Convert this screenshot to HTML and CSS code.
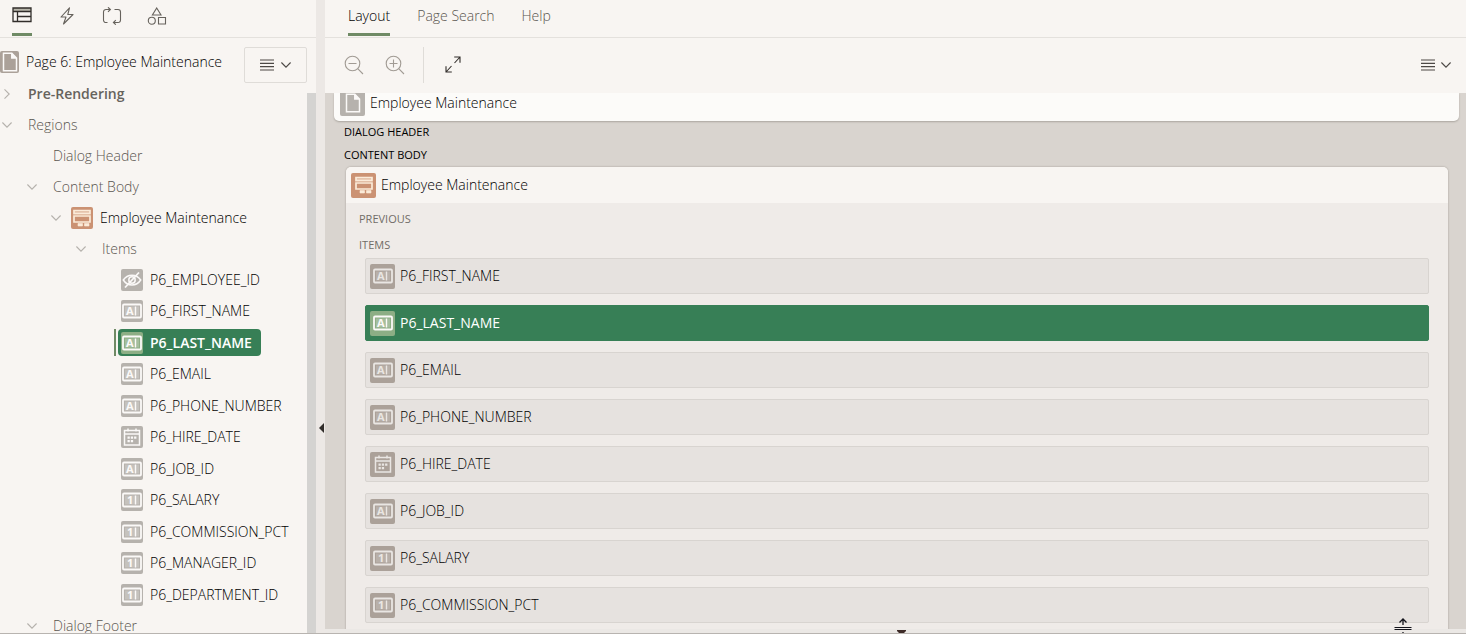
FILE: index.html
```html
<!DOCTYPE html>
<html lang="en">
<head>
<meta charset="utf-8">
<title>Page Designer</title>
<link rel="stylesheet" href="styles.css">
</head>
<body>
<svg class="defs" aria-hidden="true">
  <symbol id="text-field" viewBox="0 0 20 16">
    <rect x="1" y="1.5" width="18" height="13" rx="1" fill="none" stroke="currentColor" stroke-width="1.8"/>
    <rect x="3" y="3.5" width="14" height="9" fill="currentColor" opacity=".22"/>
    <text x="4" y="12" class="glyph">A</text>
    <path d="M13.5 3.5v9" stroke="currentColor" stroke-width="1.4"/>
  </symbol>
  <symbol id="number-field" viewBox="0 0 20 16">
    <rect x="1" y="1.5" width="18" height="13" rx="1" fill="none" stroke="currentColor" stroke-width="1.8"/>
    <rect x="3" y="3.5" width="14" height="9" fill="currentColor" opacity=".22"/>
    <text x="5" y="12" class="glyph">1</text>
    <path d="M13.5 3.5v9" stroke="currentColor" stroke-width="1.4"/>
  </symbol>
  <symbol id="date-field" viewBox="0 0 20 18">
    <path d="M2.5 2.500h15v14.500h-15zM2.5 6h15M6 .5v3M14 .5v3" fill="none" stroke="currentColor" stroke-width="1.500"/>
    <path d="M5.500 8.500h2.300v2.300H5.500zM8.800 8.500h2.300v2.300H8.800zM12.100 8.500h2.300v2.300h-2.300zM5.500 12h2.300v2.300H5.500zM8.800 12h2.300v2.300H8.800z" fill="currentColor"/>
  </symbol>
  <symbol id="hidden-field" viewBox="0 0 20 16">
    <path d="M1.300 8C5.500 1.500 14.500 1.500 18.700 8 14.500 14.500 5.500 14.500 1.300 8z" fill="none" stroke="currentColor" stroke-width="1.5"/>
    <circle cx="10" cy="8" r="3.200" fill="none" stroke="currentColor" stroke-width="1.5"/>
    <path d="M3 15.500L17 .500" stroke="currentColor" stroke-width="1.7"/>
  </symbol>
  <symbol id="form-region" viewBox="0 0 20 18">
    <path d="M2 1.500h16v3.200H2zM2 7h16v6H2z" fill="none" stroke="currentColor" stroke-width="1.700"/>
    <path d="M2 3.100h16" stroke="currentColor" stroke-width="1.400" opacity=".7"/>
    <path d="M6 14.500h4.500v2.500H6zM12.500 14.500H17V17h-4.500z" fill="currentColor" stroke="currentColor" stroke-width=".600"/>
  </symbol>
  <symbol id="page" viewBox="0 0 16 20">
    <path d="M1.500 1.200h8.300l4.700 4.800v12.800h-13zM9.800 1.200V6h4.700" fill="none" stroke="currentColor" stroke-width="1.500"/>
    <path d="M9.800 1.200V6h4.700z" fill="currentColor"/>
  </symbol>
  <symbol id="menu" viewBox="0 0 14 12">
    <path d="M0 1h14M0 4.300h14M0 7.600h14M0 11h14" stroke="currentColor" stroke-width="1.200"/>
  </symbol>
  <symbol id="chevron" viewBox="0 0 10 6">
    <path d="M.4.500L5 5.200 9.600.500" fill="none" stroke="currentColor" stroke-width="1.100"/>
  </symbol>
</svg>

<div class="designer">
  <section class="tree-pane" aria-label="Rendering">
    <nav class="icon-tabs">
      <button class="icon-tab active" aria-label="Rendering"><svg width="20" height="16" viewBox="0 0 20 16"><path d="M1 1h18v3H1z" fill="#b8b6ab"/><path d="M1 1h18v13.500H1zM1 4.500h18M5.500 4.500v10M5.500 9.500H19" fill="none" stroke="#312d2a" stroke-width="1.300"/></svg></button>
      <button class="icon-tab" aria-label="Dynamic Actions"><svg width="16" height="18" viewBox="0 0 16 18"><path d="M10.500.8L2 10h5l-2.500 7L14 7.500H8.800z" fill="none" stroke="currentColor" stroke-width="1.100" stroke-linejoin="round"/></svg></button>
      <button class="icon-tab" aria-label="Processing"><svg width="20" height="18" viewBox="0 0 20 18"><path d="M5.500 15.500H4a2.500 2.500 0 0 1-2.500-2.500V5A2.500 2.500 0 0 1 4 2.500h4M6 .300l2.400 2.200L6 4.800M12.500 2.500H16A2.500 2.500 0 0 1 18.500 5v8a2.500 2.500 0 0 1-2.500 2.500h-4.500M13.800 13.200l-2.400 2.300 2.400 2.200" fill="none" stroke="currentColor" stroke-width="1.100"/></svg></button>
      <button class="icon-tab" aria-label="Shared Components"><svg width="20" height="18" viewBox="0 0 20 18"><path d="M9.700 1L14 8H5.400zM11.500 10.500h7v6.500h-7z" fill="none" stroke="currentColor" stroke-width="1.100"/><circle cx="4.800" cy="13.700" r="3.500" fill="none" stroke="currentColor" stroke-width="1.100"/></svg></button>
    </nav>
    <div class="tree-body">
      <div class="tree-content">
        <div class="page-head">
          <span class="tile page-tile"><svg width="16" height="20"><use href="#page"/></svg></span>
          <span class="page-name">Page 6: Employee Maintenance</span>
          <button class="menu-button" aria-label="Tree menu"><svg width="14" height="12"><use href="#menu"/></svg><svg width="10" height="6"><use href="#chevron"/></svg></button>
        </div>
        <ul class="tree">
          <li class="node level-1 bold"><svg class="arrow closed" width="10" height="6"><use href="#chevron"/></svg><span>Pre-Rendering</span></li>
          <li class="node level-1"><svg class="arrow" width="10" height="6"><use href="#chevron"/></svg><span>Regions</span></li>
          <li class="node level-2"><span class="arrow"></span><span>Dialog Header</span></li>
          <li class="node level-2"><svg class="arrow" width="10" height="6"><use href="#chevron"/></svg><span>Content Body</span></li>
          <li class="node level-3 dark"><svg class="arrow" width="10" height="6"><use href="#chevron"/></svg><span class="tile region-tile"><svg width="20" height="18"><use href="#form-region"/></svg></span><span>Employee Maintenance</span></li>
          <li class="node level-4"><svg class="arrow" width="10" height="6"><use href="#chevron"/></svg><span>Items</span></li>
        </ul>
        <ul class="tree leaves">
          <li class="leaf"><span class="leaf-label"><span class="tile"><svg width="20" height="16"><use href="#hidden-field"/></svg></span>P6_EMPLOYEE_ID</span></li>
          <li class="leaf"><span class="leaf-label"><span class="tile"><svg width="20" height="16"><use href="#text-field"/></svg></span>P6_FIRST_NAME</span></li>
          <li class="leaf selected"><span class="leaf-label"><span class="tile"><svg width="20" height="16"><use href="#text-field"/></svg></span>P6_LAST_NAME</span></li>
          <li class="leaf"><span class="leaf-label"><span class="tile"><svg width="20" height="16"><use href="#text-field"/></svg></span>P6_EMAIL</span></li>
          <li class="leaf"><span class="leaf-label"><span class="tile"><svg width="20" height="16"><use href="#text-field"/></svg></span>P6_PHONE_NUMBER</span></li>
          <li class="leaf"><span class="leaf-label"><span class="tile"><svg width="20" height="18"><use href="#date-field"/></svg></span>P6_HIRE_DATE</span></li>
          <li class="leaf"><span class="leaf-label"><span class="tile"><svg width="20" height="16"><use href="#text-field"/></svg></span>P6_JOB_ID</span></li>
          <li class="leaf"><span class="leaf-label"><span class="tile"><svg width="20" height="16"><use href="#number-field"/></svg></span>P6_SALARY</span></li>
          <li class="leaf"><span class="leaf-label"><span class="tile"><svg width="20" height="16"><use href="#number-field"/></svg></span>P6_COMMISSION_PCT</span></li>
          <li class="leaf"><span class="leaf-label"><span class="tile"><svg width="20" height="16"><use href="#number-field"/></svg></span>P6_MANAGER_ID</span></li>
          <li class="leaf"><span class="leaf-label"><span class="tile"><svg width="20" height="16"><use href="#number-field"/></svg></span>P6_DEPARTMENT_ID</span></li>
        </ul>
        <ul class="tree">
          <li class="node level-2"><svg class="arrow" width="10" height="6"><use href="#chevron"/></svg><span>Dialog Footer</span></li>
        </ul>
      </div>
      <div class="scroll-track"></div>
    </div>
  </section>

  <div class="splitter"><svg class="collapse" width="5" height="10" viewBox="0 0 5 10"><path d="M5 0v10L0 5z" fill="#312d2a"/></svg></div>

  <main class="layout-pane">
    <nav class="text-tabs">
      <button class="text-tab active">Layout</button>
      <button class="text-tab">Page Search</button>
      <button class="text-tab">Help</button>
    </nav>
    <div class="toolbar">
      <button class="tool" aria-label="Zoom out"><svg width="20" height="20" viewBox="0 0 20 20" fill="none" stroke="#a19b94" stroke-width="1.100"><circle cx="8.500" cy="8.500" r="7.300"/><path d="M4.500 8.500h8M13.700 13.700l5.300 5.300"/></svg></button>
      <button class="tool" aria-label="Zoom in"><svg width="20" height="20" viewBox="0 0 20 20" fill="none" stroke="#a19b94" stroke-width="1.100"><circle cx="8.500" cy="8.500" r="7.300"/><path d="M4.500 8.500h8M8.500 4.500v8M13.700 13.700l5.300 5.300"/></svg></button>
      <span class="divider"></span>
      <button class="tool" aria-label="Expand"><svg width="16" height="17" viewBox="0 0 16 17" fill="none" stroke="#312d2a" stroke-width="1.100"><path d="M9.200 1H15v5.800M15 1L9.500 7M6.800 16H1v-5.800M1 16l5.500-6"/></svg></button>
      <button class="layout-menu" aria-label="Layout menu"><svg width="14" height="12"><use href="#menu"/></svg><svg width="10" height="6"><use href="#chevron"/></svg></button>
    </div>
    <div class="canvas">
      <div class="page-card"><span class="tile large"><svg width="16" height="20"><use href="#page"/></svg></span>Employee Maintenance</div>
      <h2 class="slot">Dialog Header</h2>
      <h2 class="slot">Content Body</h2>
      <section class="region">
        <header class="region-head"><span class="tile large region-tile"><svg width="20" height="18"><use href="#form-region"/></svg></span>Employee Maintenance</header>
        <div class="region-body">
          <h3 class="sub-slot">Previous</h3>
          <h3 class="sub-slot">Items</h3>
          <ul class="items">
            <li class="item"><span class="tile large"><svg width="20" height="16"><use href="#text-field"/></svg></span>P6_FIRST_NAME</li>
            <li class="item selected"><span class="tile large"><svg width="20" height="16"><use href="#text-field"/></svg></span>P6_LAST_NAME</li>
            <li class="item"><span class="tile large"><svg width="20" height="16"><use href="#text-field"/></svg></span>P6_EMAIL</li>
            <li class="item"><span class="tile large"><svg width="20" height="16"><use href="#text-field"/></svg></span>P6_PHONE_NUMBER</li>
            <li class="item"><span class="tile large"><svg width="20" height="18"><use href="#date-field"/></svg></span>P6_HIRE_DATE</li>
            <li class="item"><span class="tile large"><svg width="20" height="16"><use href="#text-field"/></svg></span>P6_JOB_ID</li>
            <li class="item"><span class="tile large"><svg width="20" height="16"><use href="#number-field"/></svg></span>P6_SALARY</li>
            <li class="item"><span class="tile large"><svg width="20" height="16"><use href="#number-field"/></svg></span>P6_COMMISSION_PCT</li>
          </ul>
        </div>
      </section>
    </div>
    <div class="bottom-splitter"><svg width="9" height="3" viewBox="0 0 9 3"><path d="M0 0h9v1L7 3H2L0 1z" fill="#3d2b28"/></svg></div>
    <svg class="cursor" width="18" height="16" viewBox="0 0 18 16"><path d="M9 1v6M5.500 4.500L9 1l3.500 3.500M9 14v2" fill="none" stroke="#14141c" stroke-width="1.300"/><path d="M.5 9.500h17M.5 11.500h17" stroke="#14141c"/></svg>
  </main>
</div>
</body>
</html>
```
FILE: styles.css
```css
* { box-sizing: border-box; }

body {
  margin: 0;
  background: #f8f5f2;
  color: #000;
  font: 300 14px/20px "Open Sans", sans-serif;
}

button {
  padding: 0;
  border: 0;
  background: none;
  color: inherit;
  font: inherit;
}

ul { margin: 0; padding: 0; list-style: none; }
svg { display: block; flex: none; }
.defs { display: none; }
.glyph { font: bold 11px "Open Sans", sans-serif; fill: currentColor; }

.designer {
  display: grid;
  grid-template-columns: 316px 9px minmax(0, 1fr);
  height: 100vh;
  overflow: hidden;
  border-bottom: 1px solid #b8b4b0;
}

/* Tree pane */
.tree-pane {
  display: flex;
  flex-direction: column;
  min-height: 0;
  overflow: hidden;
}

.icon-tabs, .text-tabs {
  display: flex;
  flex: none;
  height: 38px;
  border-bottom: 1px solid #e4e1dd;
}

.icon-tabs { gap: 25px; padding-left: 12px; color: #66625c; }

.icon-tab {
  display: flex;
  justify-content: center;
  width: 20px;
  height: 36px;
  padding-top: 7px;
}

.icon-tab.active, .text-tab.active { border-bottom: 3px solid #6f8a65; }

.tree-body {
  display: grid;
  grid-template-columns: minmax(0, 1fr) 9px;
  flex: 1;
  min-height: 0;
}

.scroll-track { margin-top: 55px; background: #d4d3d1; }
.tree-content { min-height: 0; overflow: hidden; }

.page-head {
  display: flex;
  align-items: flex-start;
  height: 40px;
  padding-top: 9px;
}

.page-name { margin: 5px auto 0 7px; white-space: nowrap; }

.menu-button {
  display: flex;
  align-items: center;
  justify-content: center;
  gap: 7px;
  flex: none;
  width: 63px;
  height: 36px;
  border: 1px solid #dfdcd8;
  border-radius: 2px;
  color: #4c4845;
}

.tile {
  display: flex;
  align-items: center;
  justify-content: center;
  flex: none;
  width: 22px;
  height: 22px;
  border-radius: 2px;
  background: #b6b2ad;
  color: #fbf9f8;
}

.tile.large { width: 25px; height: 25px; }
.tile.region-tile { background: #cb9273; color: #fbebd9; }
.page-tile { width: 19px; margin-top: 4px; background: #aba199; }

.node {
  display: flex;
  align-items: center;
  height: 31px;
  color: #5a5650;
}

.node.bold { font-weight: 600; color: #66635d; }
.node.dark { color: #000; }
.arrow { width: 10px; margin-right: 16px; flex: none; color: #b5b1ac; }
.arrow.closed { transform: rotate(-90deg); }
.level-1 { padding-left: 2px; }
.level-2 { padding-left: 27px; }
.level-3 { padding-left: 51px; gap: 7px; }
.level-3 .arrow { margin-right: 3px; }
.level-4 { padding-left: 76px; }

.leaf {
  display: flex;
  align-items: center;
  height: 31px;
  padding-left: 114px;
}

.leaf:nth-child(even) { height: 32px; }

.leaf-label {
  display: flex;
  align-items: center;
  gap: 7px;
  height: 27px;
  margin-left: 4px;
  padding: 0 9px 0 3px;
  border-radius: 4px;
}

.leaf.selected { font-weight: 600; }

.leaf.selected::before {
  content: "";
  width: 2px;
  height: 27px;
  margin-right: -2px;
  background: #6f8a65;
}

.selected .leaf-label { background: #377f56; color: #fff; }
.selected .tile { background: #8dae85; }

/* Splitter */
.splitter {
  display: flex;
  align-items: center;
  justify-content: flex-end;
  padding: 222px 1px 0 0;
  background: #ece8e5;
}

/* Layout pane */
.layout-pane {
  position: relative;
  display: flex;
  flex-direction: column;
  min-height: 0;
}

.text-tabs { gap: 27px; padding-left: 23px; color: #5a5650; }
.text-tab { height: 36px; padding-bottom: 2px; border-bottom: 3px solid transparent; }
.text-tab.active { color: #000; }

.toolbar {
  display: flex;
  align-items: center;
  flex: none;
  height: 55px;
  padding: 0 15px 2px 19px;
}

.tool { margin-right: 21px; }
.divider { width: 1px; height: 36px; margin: 0 21px 0 -3px; background: #dfdcd8; }

.layout-menu {
  display: flex;
  align-items: center;
  gap: 6px;
  margin-left: auto;
  color: #4c4845;
}

.canvas {
  flex: 1;
  min-height: 0;
  overflow: hidden;
  padding: 0 7px 0 9px;
  background: #d9d4cf;
}

.page-card {
  display: flex;
  align-items: center;
  gap: 5px;
  height: 28px;
  padding: 0 6px 8px;
  border-radius: 0 0 5px 5px;
  background: #fcfbf9;
  box-shadow: 0 1px 2px #aaa59f;
}

.slot, .sub-slot {
  margin: 0;
  font-size: 11px;
  font-weight: 400;
  text-transform: uppercase;
}

.slot { height: 23px; padding-left: 10px; line-height: 22px; }

.region {
  margin: 0 11px 0 12px;
  border-radius: 5px 5px 0 0;
  background: #efebe8;
  box-shadow: 0 0 2px #98928c;
}

.region-head {
  display: flex;
  align-items: center;
  gap: 5px;
  height: 36px;
  padding-left: 5px;
  border-radius: 5px 5px 0 0;
  background: #f8f5f2;
}

.region-body { padding: 3px 19px 11px; }

.sub-slot {
  height: 26px;
  margin-left: -6px;
  line-height: 26px;
  color: #716d67;
}

.items { display: grid; gap: 11px; }

.item {
  display: flex;
  align-items: center;
  gap: 5px;
  height: 36px;
  padding-left: 4px;
  border: 1px solid #d8d4d0;
  border-radius: 2px;
  background: #e6e2df;
}

.item .tile { background: #aba199; color: #e9e6e3; }
.item.selected { border-color: #377f56; background: #377f56; color: #fff; font-weight: 400; }
.item.selected .tile { background: #8dae85; color: #fbf9f8; }

.bottom-splitter {
  display: flex;
  align-items: flex-end;
  justify-content: center;
  flex: none;
  height: 4px;
  padding-left: 11px;
  background: #ebe8e5;
}

.cursor { position: absolute; right: 54px; bottom: -1px; }
```
